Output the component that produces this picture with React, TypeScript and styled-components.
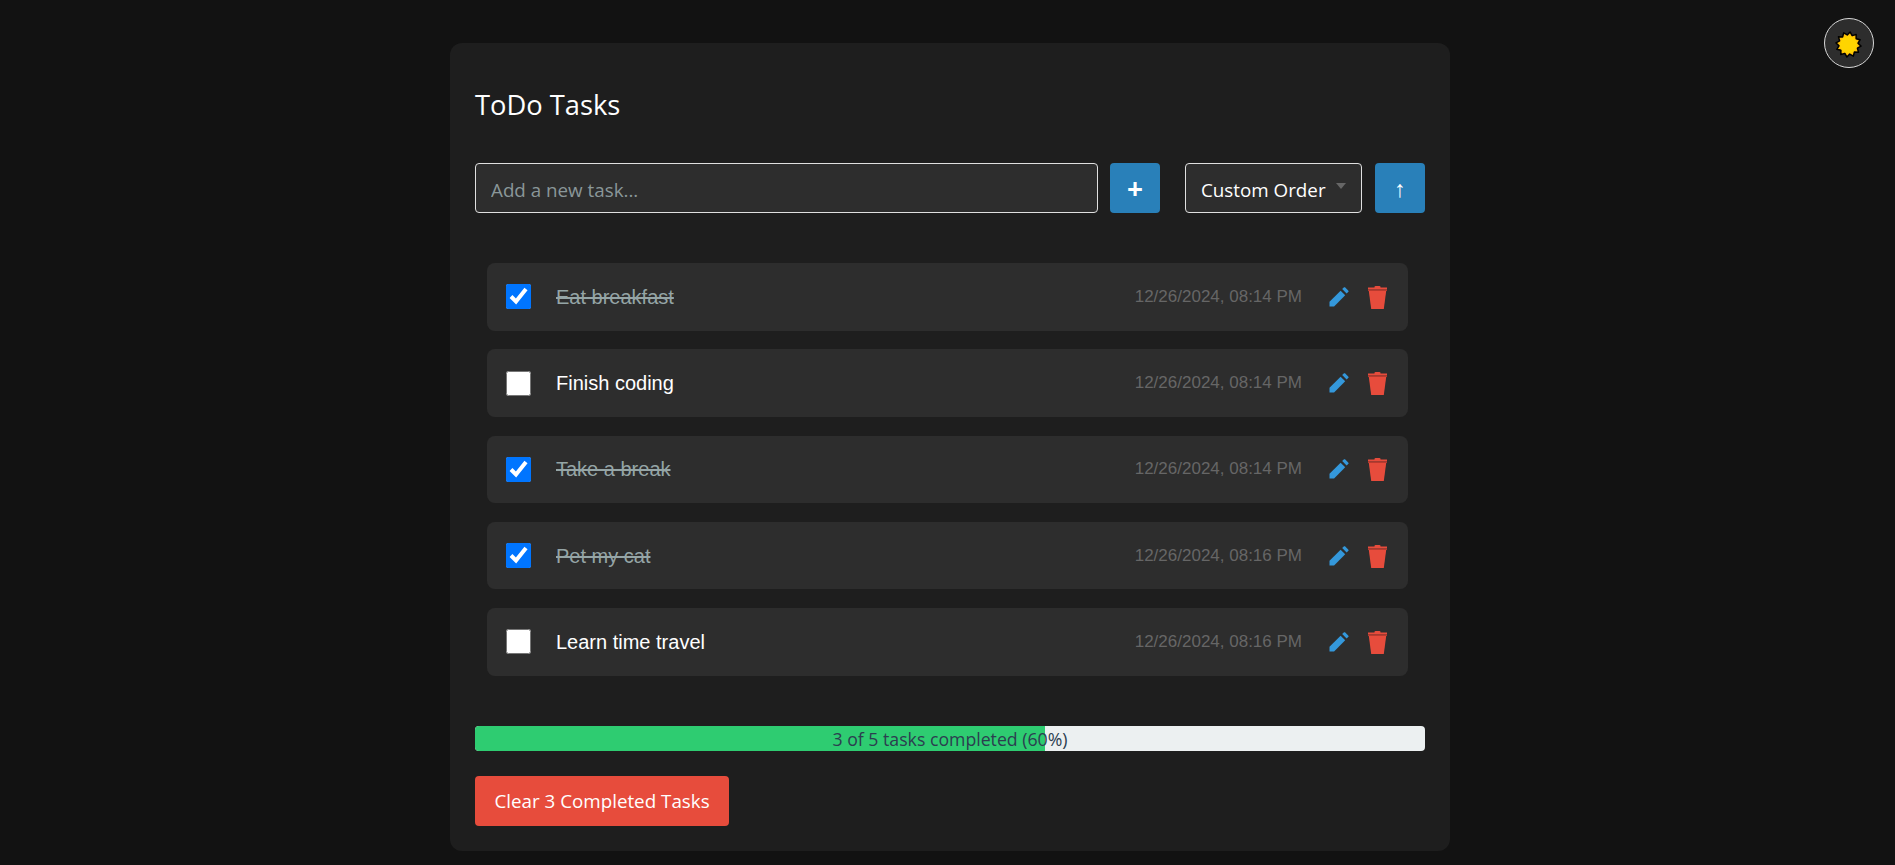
import React from "react";
import styled, { createGlobalStyle } from "styled-components";

const Global = createGlobalStyle`
  html, body { margin: 0; padding: 0; background: #121212; }
  body { font-family: "Open Sans", "Noto Sans", sans-serif; color: #fff; }
  * { box-sizing: border-box; }
`;

const Page = styled.div`
  min-height: 865px;
  padding: 43px 0 14px 5px;
  display: flex;
  justify-content: center;
  align-items: flex-start;
`;

const Card = styled.main`
  width: 1000px;
  height: 808px;
  background: #1e1e1e;
  border-radius: 12px;
  padding: 26px 25px 25px;
  display: flex;
  flex-direction: column;
`;

const Title = styled.h1`
  margin: 0 0 22px;
  height: 72px;
  flex: none;
  display: flex;
  align-items: center;
  font-size: 27.3px;
  font-weight: 400;
  line-height: 1;
  color: #fff;
`;

const Toolbar = styled.div`
  display: flex;
  align-items: center;
  height: 50px;
  flex: none;
`;

const TaskInput = styled.input`
  width: 623px;
  height: 50px;
  padding: 3px 15px 0;
  background: #2d2d2d;
  border: 1px solid #e0e0e0;
  border-radius: 4px;
  color: #fff;
  font: 400 18.8px "Open Sans", sans-serif;
  outline: none;
  &::placeholder { color: #8a9799; opacity: 1; }
`;

const SquareButton = styled.button<{ $ml: number; $size: number; $weight: number }>`
  width: 50px;
  height: 50px;
  margin-left: ${(p) => p.$ml}px;
  padding: 0;
  background: #2980b9;
  border: none;
  border-radius: 4px;
  color: #fff;
  font-family: "Open Sans", sans-serif;
  font-size: ${(p) => p.$size}px;
  font-weight: ${(p) => p.$weight};
  line-height: 50px;
`;

const SelectBox = styled.div`
  position: relative;
  width: 177px;
  height: 50px;
  margin-left: 25px;
`;

const SortSelect = styled.select`
  appearance: none;
  width: 100%;
  height: 100%;
  padding: 3px 0 0 15px;
  background: #2d2d2d;
  border: 1px solid #e0e0e0;
  border-radius: 4px;
  color: #fff;
  font: 400 18.8px "Open Sans", sans-serif;
  outline: none;
`;

const Caret = styled.span`
  position: absolute;
  left: 151px;
  top: 20px;
  width: 0;
  height: 0;
  border-left: 5px solid transparent;
  border-right: 5px solid transparent;
  border-top: 6px solid #666;
  pointer-events: none;
`;

const TaskList = styled.ul`
  list-style: none;
  margin: 50px 0 0;
  padding: 0 17px 0 12px;
  display: flex;
  flex-direction: column;
  gap: 18.75px;
  flex: none;
`;

const Row = styled.li`
  height: 67.5px;
  display: flex;
  align-items: center;
  padding: 0 21px 0 19px;
  background: #2d2d2d;
  border-radius: 8px;
`;

const Check = styled.input`
  width: 25px;
  height: 25px;
  margin: 0 25px 0 0;
  flex: none;
`;

const TaskText = styled.span<{ $done: boolean }>`
  flex: 1;
  padding-top: 1px;
  font: 400 20px "Liberation Sans", Arial, sans-serif;
  color: ${(p) => (p.$done ? "#95a5a6" : "#ffffff")};
  text-decoration: ${(p) => (p.$done ? "line-through" : "none")};
`;

const DateText = styled.span`
  font: 400 17px "Liberation Sans", Arial, sans-serif;
  color: #666666;
  margin-right: 27px;
`;

const IconButton = styled.button<{ $ml: number; $pt: number }>`
  display: flex;
  align-items: center;
  justify-content: center;
  background: none;
  border: none;
  padding: ${(p) => p.$pt}px 0 0;
  margin-left: ${(p) => p.$ml}px;
`;

const Progress = styled.div`
  position: relative;
  height: 25px;
  flex: none;
  margin-top: 50.5px;
  background: #ecf0f1;
  border-radius: 4px;
  overflow: hidden;
`;

const Fill = styled.div`
  height: 100%;
  background: #2ecc71;
`;

const ProgressLabel = styled.span`
  position: absolute;
  inset: 0;
  display: flex;
  align-items: center;
  justify-content: center;
  font-size: 17.7px;
  color: #2c3e50;
`;

const ClearButton = styled.button`
  align-self: flex-start;
  flex: none;
  width: 254px;
  height: 50px;
  margin-top: 25px;
  background: #e74c3c;
  border: none;
  border-radius: 4px;
  color: #fff;
  font: 400 18.8px "Open Sans", sans-serif;
`;

const ThemeButton = styled.button`
  position: fixed;
  top: 18px;
  left: 1824px;
  width: 50px;
  height: 50px;
  padding: 3px 1px 0 0;
  display: flex;
  align-items: center;
  justify-content: center;
  background: #2d2d2d;
  border: 1px solid #d8d8d8;
  border-radius: 50%;
`;

const sunPoints = Array.from({ length: 24 }, (_, i) => {
  const a = (i * Math.PI) / 12 + Math.PI / 24;
  const r = i % 2 === 0 ? 12.6 : 9.6;
  return `${(13.5 + r * Math.cos(a)).toFixed(2)},${(13.5 + r * Math.sin(a)).toFixed(2)}`;
}).join(" ");

const Sun = () => (
  <svg width="27" height="27" viewBox="0 0 27 27">
    <polygon points={sunPoints} fill="#ffc107" stroke="#000" strokeWidth="1.5" strokeLinejoin="round" />
    <circle cx="13.5" cy="13.5" r="8.6" fill="#ffd500" />
  </svg>
);

const Pencil = () => (
  <svg width="20" height="20" viewBox="0 0 20 20">
    <path d="M0.5 14.8 L11.6 3.7 L16.2 8.3 L5.1 19.5 L0.5 19.5 Z" fill="#3498db" />
    <path d="M13.2 2.1 L15 0.3 Q15.5 0 16 0.3 L19.4 3.7 Q19.8 4.2 19.4 4.7 L17.6 6.6 Z" fill="#3498db" />
  </svg>
);

const Trash = () => (
  <svg width="19" height="23" viewBox="0 0 19 23">
    <path d="M6.5 1 Q6.5 0 7.5 0 L11.5 0 Q12.5 0 12.5 1 L12.5 2 L6.5 2 Z" fill="#e74c3c" />
    <rect x="0" y="1.5" width="19" height="2" fill="#e74c3c" />
    <rect x="0" y="3.5" width="19" height="1.5" fill="#b93a2e" />
    <path d="M0.8 5 L18.2 5 L15.8 23 L3.2 23 Z" fill="#e74c3c" />
  </svg>
);

const tasks = [
  { text: "Eat breakfast", date: "12/26/2024, 08:14 PM", done: true },
  { text: "Finish coding", date: "12/26/2024, 08:14 PM", done: false },
  { text: "Take a break", date: "12/26/2024, 08:14 PM", done: true },
  { text: "Pet my cat", date: "12/26/2024, 08:16 PM", done: true },
  { text: "Learn time travel", date: "12/26/2024, 08:16 PM", done: false },
];

export default function App() {
  return (
    <>
      <Global />
      <ThemeButton aria-label="Toggle theme"><Sun /></ThemeButton>
      <Page>
        <Card>
          <Title>ToDo Tasks</Title>
          <Toolbar>
            <TaskInput placeholder="Add a new task..." />
            <SquareButton $ml={12} $size={28} $weight={700}>+</SquareButton>
            <SelectBox>
              <SortSelect defaultValue="custom">
                <option value="custom">Custom Order</option>
              </SortSelect>
              <Caret />
            </SelectBox>
            <SquareButton $ml={13} $size={23} $weight={700}>↑</SquareButton>
          </Toolbar>
          <TaskList>
            {tasks.map((t) => (
              <Row key={t.text}>
                <Check type="checkbox" defaultChecked={t.done} />
                <TaskText $done={t.done}>{t.text}</TaskText>
                <DateText>{t.date}</DateText>
                <IconButton $ml={0} $pt={0}><Pencil /></IconButton>
                <IconButton $ml={19} $pt={1}><Trash /></IconButton>
              </Row>
            ))}
          </TaskList>
          <Progress>
            <Fill style={{ width: `${(3 / 5) * 100}%` }} />
            <ProgressLabel>3 of 5 tasks completed (60%)</ProgressLabel>
          </Progress>
          <ClearButton>Clear 3 Completed Tasks</ClearButton>
        </Card>
      </Page>
    </>
  );
}
